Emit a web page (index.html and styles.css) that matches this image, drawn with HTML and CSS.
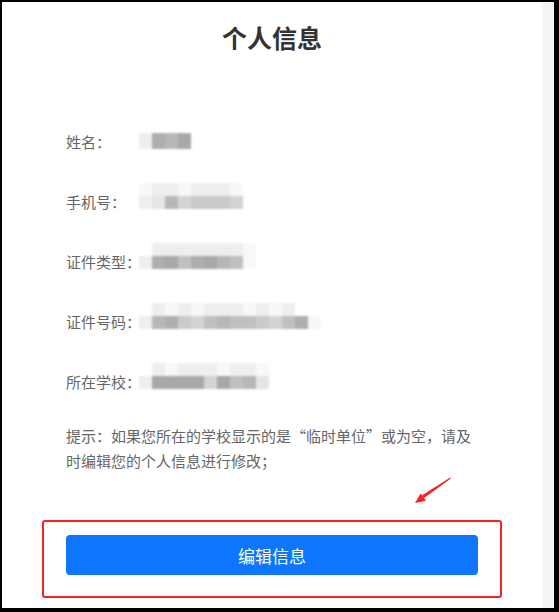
FILE: index.html
```html
<!DOCTYPE html>
<html lang="zh-CN">
<head>
<meta charset="utf-8">
<title>个人信息</title>
<link rel="stylesheet" href="styles.css">
</head>
<body>
<div class="page">
  <main class="main">
    <h1 class="title">个人信息</h1>
    <div class="info">
      <div class="row">
        <span class="label">姓名：</span>
        <div class="mosaic single">
          <div class="mrow tall"><i class="g1"></i><i class="g7"></i><i class="g6"></i><i class="g8"></i></div>
        </div>
      </div>
      <div class="row">
        <span class="label">手机号：</span>
        <div class="mosaic double">
          <div class="mrow"><i class="g0"></i><i class="g1"></i><i class="g1"></i><i class="g0"></i><i class="g1"></i><i class="g1"></i><i class="g1"></i><i class="g0"></i></div>
          <div class="mrow"><i class="g1"></i><i class="g2"></i><i class="g6"></i><i class="g3"></i><i class="g4"></i><i class="g4"></i><i class="g4"></i><i class="g3"></i></div>
        </div>
      </div>
      <div class="row">
        <span class="label">证件类型：</span>
        <div class="mosaic double">
          <div class="mrow"><i class="gw"></i><i class="g1"></i><i class="g1"></i><i class="g1"></i><i class="g1"></i><i class="g1"></i><i class="g1"></i><i class="g1"></i><i class="g0"></i></div>
          <div class="mrow"><i class="g1"></i><i class="g7"></i><i class="g8"></i><i class="g5"></i><i class="g7"></i><i class="g8"></i><i class="g6"></i><i class="g5"></i><i class="g0"></i></div>
        </div>
      </div>
      <div class="row">
        <span class="label">证件号码：</span>
        <div class="mosaic double">
          <div class="mrow"><i class="gw"></i><i class="g1"></i><i class="g0"></i><i class="g1"></i><i class="g0"></i><i class="g1"></i><i class="g1"></i><i class="g1"></i><i class="g0"></i><i class="g1"></i><i class="g0"></i><i class="g1"></i><i class="gw"></i></div>
          <div class="mrow"><i class="g1"></i><i class="g6"></i><i class="g7"></i><i class="g4"></i><i class="g3"></i><i class="g5"></i><i class="g6"></i><i class="g5"></i><i class="g5"></i><i class="g4"></i><i class="g3"></i><i class="g5"></i><i class="g7"></i><i class="g0"></i></div>
        </div>
      </div>
      <div class="row">
        <span class="label">所在学校：</span>
        <div class="mosaic double">
          <div class="mrow"><i class="gw"></i><i class="g1"></i><i class="g0"></i><i class="g1"></i><i class="g1"></i><i class="g1"></i><i class="g0"></i><i class="g1"></i><i class="g1"></i><i class="g0"></i></div>
          <div class="mrow"><i class="g1"></i><i class="g8"></i><i class="g8"></i><i class="g8"></i><i class="g8"></i><i class="g3"></i><i class="g8"></i><i class="g5"></i><i class="g6"></i><i class="g2"></i></div>
        </div>
      </div>
    </div>
    <p class="hint">提示：如果您所在的学校显示的是“临时单位”或为空，请及时编辑您的个人信息进行修改；</p>
    <button class="btn" type="button">编辑信息</button>
  </main>
  <div class="scroll"></div>
</div>
<div class="highlight"></div>
<svg class="arrow" width="60" height="40" viewBox="410 474 50 34" xmlns="http://www.w3.org/2000/svg">
  <polygon points="452.8,479.6 452.2,478.6 424.2,496.2 425.8,499.2" fill="#f5231b"/>
  <polygon points="417,504 422.6,494.6 428,501.8" fill="#f5231b"/>
</svg>
</body>
</html>
```
FILE: styles.css
```css
html {
  background: #000;
}
body {
  margin: 2px 5px 4px 2px;
  width: 552px;
  height: 606px;
  background: #fff;
  position: relative;
  font-family: "Noto Sans CJK SC", "Noto Sans", sans-serif;
  overflow: hidden;
}
.page {
  display: flex;
  height: 100%;
}
.main {
  width: 540px;
  padding: 18px 0 0 64px;
  box-sizing: border-box;
}
.scroll {
  width: 12px;
  background: #f5f5f5;
}
.title {
  margin: 0 0 0 -64px;
  font-size: 25px;
  line-height: 34px;
  font-weight: 700;
  color: #333;
  text-align: center;
}
.info {
  margin-top: 57px;
}
.row {
  display: flex;
  align-items: center;
  height: 60px;
}
.label {
  width: 73px;
  flex: none;
  font-size: 15px;
  color: #666;
  white-space: nowrap;
}
.mosaic {
  display: flex;
  flex-direction: column;
  filter: blur(1px);
}
.mosaic.double {
  margin-bottom: 10px;
}
.mrow {
  display: flex;
  height: 13px;
}
.mrow.tall {
  height: 16px;
}
.mrow i {
  display: block;
  width: 13px;
  height: 100%;
}
.gw { background: #ffffff; }
.g0 { background: #f8f8f8; }
.g1 { background: #eeeeee; }
.g2 { background: #e3e5e7; }
.g3 { background: #d3d3d3; }
.g4 { background: #cacaca; }
.g5 { background: #c0c0c0; }
.g6 { background: #b7b7b7; }
.g7 { background: #aeaeae; }
.g8 { background: #a8a8a8; }
.hint {
  margin: 12px 0 0;
  width: 416px;
  font-size: 15px;
  line-height: 25px;
  color: #666;
}
.btn {
  display: block;
  margin-top: 62px;
  width: 412px;
  height: 40px;
  border: 0;
  border-radius: 4px;
  background: #0e76fd;
  color: #fff;
  font-family: "Noto Sans CJK SC", "Noto Sans", sans-serif;
  font-size: 17px;
  padding: 0;
}
.highlight {
  position: absolute;
  left: 40px;
  top: 518px;
  width: 460px;
  height: 78px;
  box-sizing: border-box;
  border: 2px solid #f5231b;
  border-radius: 3px;
}
.arrow {
  position: absolute;
  left: 406px;
  top: 471px;
  width: 50px;
  height: 34px;
}
```
